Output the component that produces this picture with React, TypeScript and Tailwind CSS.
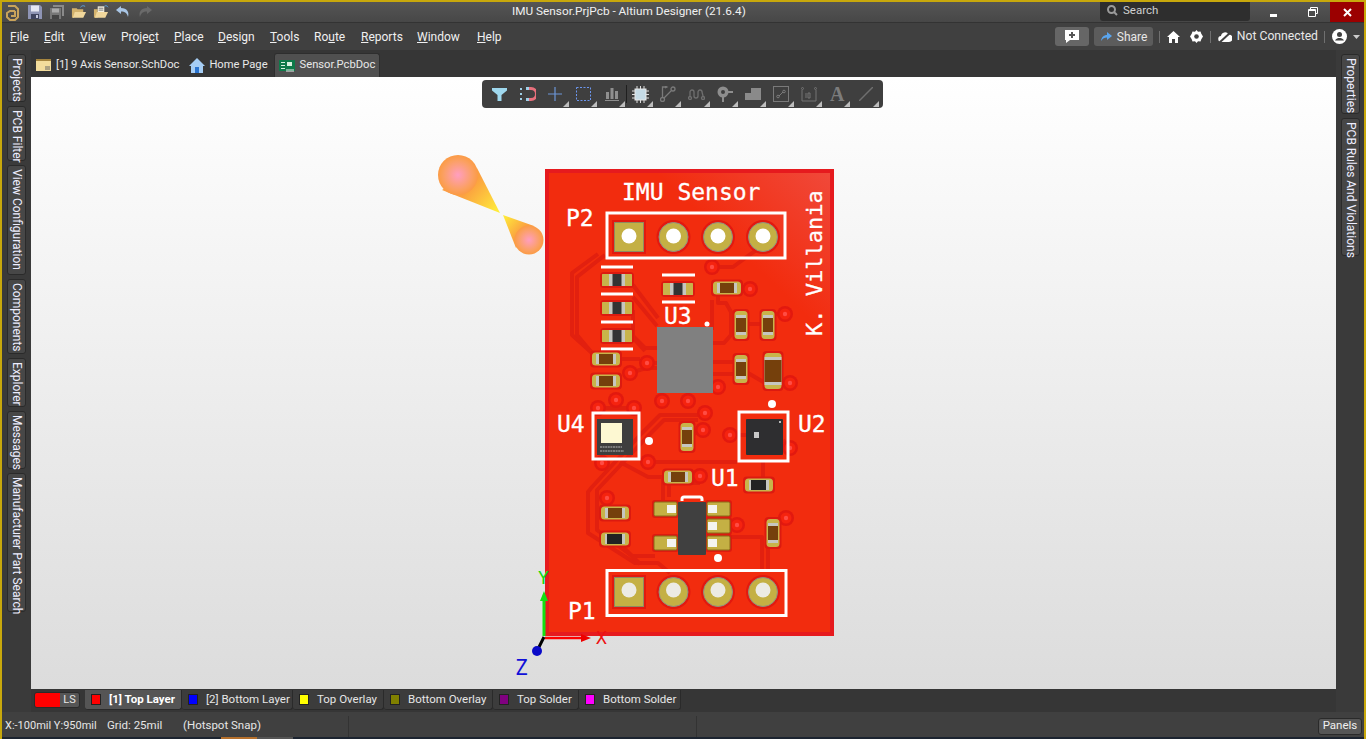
import React from "react"

const uiFont = "font-['Roboto',sans-serif]"

// Title bar quick access icons
function QuickIcons() {
  return (
    <div className="flex items-center gap-[6px] pl-[3px]">
      <svg width="15" height="17" viewBox="0 0 15 17" className="mr-[1px]" fill="none" stroke="#c9a35b" strokeWidth="2">
        <path d="M3 2h7l3 3v8l-3 3H5l-3-3V9l3-2h5" />
        <path d="M10 7v5H6" />
      </svg>
      <svg width="16" height="16" viewBox="0 0 16 16">
        <path d="M1 1h12l2 2v12H1z" fill="#8e94b5" />
        <rect x="4" y="1.5" width="8" height="6" fill="#e4e6f2" />
        <rect x="4" y="10" width="8" height="5" fill="#3f4460" />
        <rect x="9" y="11" width="2" height="3" fill="#c5c8dc" />
      </svg>
      <svg width="16" height="16" viewBox="0 0 16 16">
        <path d="M4 1h11v11h-2V3H4z" fill="#8a8a8a" />
        <path d="M1 4h11v11H1z" fill="#777" />
        <rect x="3" y="4.5" width="7" height="4" fill="#aaa" />
        <rect x="3" y="11" width="7" height="4" fill="#444" />
      </svg>
      <svg width="16" height="16" viewBox="0 0 17 16">
        <path d="M1 4h5l1 1h6v3H5L3 14H1z" fill="#d3b26d" />
        <path d="M4 8h12l-3 6H2z" fill="#f0d79c" />
        <path d="M10 3c2-2 3-2 5-1" stroke="#5ea4e0" strokeWidth="1" fill="none" />
      </svg>
      <svg width="16" height="16" viewBox="0 0 17 16">
        <path d="M1 5h4v9H1z" fill="#d3b26d" />
        <path d="M5 2h7v7H5z" fill="#f4f0e0" />
        <path d="M6 4h5M6 6h5" stroke="#777" strokeWidth="1" />
        <path d="M4 8h12l-3 6H2z" fill="#f0d79c" />
        <path d="M12 2c1-1 3-1 4 1" stroke="#5ea4e0" strokeWidth="1" fill="none" />
      </svg>
      <svg width="16" height="14" viewBox="0 0 16 14">
        <path d="M6 1 1 5l5 4V6.500c4 0 6 1.500 7 5.500 1.500-5-1-9-7-9z" fill="#a9c6e6" />
      </svg>
      <svg width="16" height="14" viewBox="0 0 16 14">
        <path d="M10 1l5 4-5 4V6.500c-4 0-6 1.500-7 5.500-1.500-5 1-9 7-9z" fill="#6a6a6a" />
      </svg>
    </div>
  )
}

function TitleBar() {
  return (
    <div className="relative flex h-[20px] shrink-0 items-center bg-gradient-to-b from-[#555555] to-[#474747]">
      <QuickIcons />
      <div className="absolute left-[510px] top-0 text-[11.800px] leading-[18px] text-[#f0f0f0]">
        IMU Sensor.PrjPcb - Altium Designer (21.6.4)
      </div>
      <div className="ml-auto flex h-full items-start">
        <div className="flex h-[19px] w-[150px] items-center gap-[5px] rounded-b-[3px] bg-[#2e2e2e] pb-[2px] pl-[7px] text-[11.500px] text-[#d0d0d0]">
          <svg width="11" height="11" viewBox="0 0 11 11">
            <circle cx="4.500" cy="4.500" r="3.500" fill="none" stroke="#9a9a9a" strokeWidth="2" />
            <path d="M7 7l3 3" stroke="#9a9a9a" strokeWidth="2" />
          </svg>
          Search
        </div>
        <div className="flex h-[20px] w-[46px] items-center justify-center">
          <div className="mt-[6px] h-[3px] w-[7px] bg-white" />
        </div>
        <div className="flex h-[20px] w-[34px] items-center justify-center">
          <svg width="10" height="10" viewBox="0 0 10 10">
            <path d="M2.500 2.500V.5h7v6h-2M.5 2.500h7v7h-7zM.5 3.500h7" fill="none" stroke="#fff" />
          </svg>
        </div>
        <div className="flex h-[20px] w-[34px] items-center justify-center bg-[#9b0000]">
          <svg width="9" height="9" viewBox="0 0 9 9">
            <path d="M1 1l7 7M8 1 1 8" stroke="#fff" strokeWidth="2" />
          </svg>
        </div>
      </div>
    </div>
  )
}

const menus: [string, string, string, string][] = [
  ["", "F", "ile", "w-[34px]"],
  ["", "E", "dit", "w-[36px]"],
  ["", "V", "iew", "w-[41px]"],
  ["Proje", "c", "t", "w-[53px]"],
  ["", "P", "lace", "w-[44px]"],
  ["", "D", "esign", "w-[52px]"],
  ["", "T", "ools", "w-[44px]"],
  ["Ro", "u", "te", "w-[47px]"],
  ["", "R", "eports", "w-[56px]"],
  ["", "W", "indow", "w-[60px]"],
  ["", "H", "elp", "w-[40px]"],
]

function MenuBar() {
  return (
    <div className="flex h-[28px] shrink-0 items-center border-t border-[#333333] bg-[#404040] pl-[8px] text-[12px] text-[#f0f0f0]">
      <div className="flex">
        {menus.map(([a, b, c, w]) => (
          <span key={a + b + c} className={w}>
            {a}
            <u>{b}</u>
            {c}
          </span>
        ))}
      </div>
      <div className="ml-auto flex items-center pr-[4px] text-[#e8e8e8]">
        <div className="flex h-[19px] w-[34px] items-center justify-center rounded-[3px] bg-[#666666]">
          <svg width="16" height="15" viewBox="0 0 16 15">
            <path d="M1 1h14v10H6l-4 3v-3H1z" fill="#fff" />
            <path d="M8 3v6M5 6h6" stroke="#555" strokeWidth="2" />
          </svg>
        </div>
        <div className="ml-[5px] flex h-[19px] w-[59px] items-center gap-[5px] rounded-[3px] bg-[#5c5c5c] pl-[7px]">
          <svg width="11" height="9" viewBox="0 0 11 9">
            <path d="M6 0l5 4-5 4V5.500C3.500 5.500 1.500 6.500 0 9c.5-4 3-6 6-6z" fill="#5aa5ee" />
          </svg>
          <span>Share</span>
        </div>
        <div className="ml-[6px] h-[12px] w-px bg-[#707070]" />
        <svg width="13" height="12" viewBox="0 0 13 12" className="ml-[7px]">
          <path d="M6.500 0 13 6h-2v6H8V8H5v4H2V6H0z" fill="#fff" />
        </svg>
        <svg width="13" height="13" viewBox="0 0 13 13" className="ml-[10px]">
          <path d="M6.500 0l1.500 1.800 2.500-.3.800 2.300 1.700 2.700-1.700 2.700-.8 2.300-2.500-.3L6.500 13 5 11.200l-2.500.3-.8-2.300L0 6.500l1.700-2.700.8-2.300 2.500.3z" fill="#fff" />
          <circle cx="6.500" cy="6.500" r="2.300" fill="#404040" />
        </svg>
        <div className="ml-[7px] h-[12px] w-px bg-[#707070]" />
        <svg width="14" height="12" viewBox="0 0 14 12" className="ml-[7px]">
          <path d="M3.500 11a3 3 0 0 1-.5-6 4 4 0 0 1 7.500-1.500A3.700 3.700 0 0 1 11 11z" fill="#fff" />
          <path d="M1 12 13 1" stroke="#404040" strokeWidth="2" />
        </svg>
        <span className="ml-[5px] text-[12.200px]">Not Connected</span>
        <div className="ml-[6px] h-[12px] w-px bg-[#707070]" />
        <svg width="15" height="15" viewBox="0 0 15 15" className="ml-[7px]">
          <circle cx="7.500" cy="7.500" r="7.500" fill="#fff" />
          <circle cx="7.500" cy="5.500" r="2.500" fill="#404040" />
          <path d="M3 11.500c1-2 3-2.500 4.500-2.500s3.500.5 4.500 2.500z" fill="#404040" />
        </svg>
        <svg width="7" height="4" viewBox="0 0 7 4" className="ml-[6px]">
          <path d="M0 0h7L3.500 4z" fill="#ccc" />
        </svg>
      </div>
    </div>
  )
}

function RailButton({ label, h }: { label: string; h: number }) {
  return (
    <div
      className="flex w-[19px] items-center justify-start whitespace-nowrap rounded-[3px] border border-[#2a2a2a] bg-[#474747] pt-[3px] text-[12px] leading-[16px] text-[#eeeeff] [writing-mode:vertical-rl]"
      style={{ height: h }}
    >
      {label}
    </div>
  )
}

function DocTabs() {
  return (
    <div className="flex h-[27px] shrink-0 items-end bg-[#363636] pl-[5px] text-[11.200px] text-[#e8e8e8]">
      <div className="flex h-[24px] items-center gap-[5px] pr-[10px]">
        <svg width="15" height="12" viewBox="0 0 15 12">
          <rect width="15" height="12" fill="#f2dc9c" />
          <path d="M0 0h15v2H0z" fill="#a5853f" />
          <path d="M9 8h5M9 10h5" stroke="#666" />
        </svg>
        <span>[1] 9 Axis Sensor.SchDoc</span>
      </div>
      <div className="flex h-[24px] items-center gap-[4px] pr-[6px]">
        <svg width="16" height="15" viewBox="0 0 16 15">
          <path d="M8 0 0 8h2v7h12V8h2z" fill="#a5cdf5" />
          <path d="M6 9h4v6H6z" fill="#2a74d0" />
        </svg>
        <span>Home Page</span>
      </div>
      <div className="flex h-[24px] items-center gap-[5px] rounded-t-[3px] border border-b-0 border-[#2e2e2e] bg-[#505050] px-[4px]">
        <svg width="16" height="12" viewBox="0 0 16 12">
          <rect width="16" height="11" fill="#0e7a4a" />
          <path d="M2 2h4v1H2zM2 5h4v1H2zM2 8h4v1H2zM8 2h5v4H8z" fill="#d8f0e0" />
          <path d="M8 9v3M10 9v3M12 9v3M14 9v3" stroke="#eee" />
        </svg>
        <span>Sensor.PcbDoc</span>
      </div>
    </div>
  )
}

function ToolIcon({ children, corner = true }: { children: React.ReactNode; corner?: boolean }) {
  return (
    <div className="relative flex h-[28px] w-[28.200px] items-center justify-center">
      {children}
      {corner && (
        <svg width="6" height="6" viewBox="0 0 6 6" className="absolute bottom-[1px] right-[1px]">
          <path d="M6 0v6H0z" fill="#bdbdbd" />
        </svg>
      )}
    </div>
  )
}

function FloatingToolbar() {
  return (
    <div className="absolute left-[451px] top-[3px] flex h-[28px] w-[401px] items-center rounded-[4px] bg-[#3f3f3f] pl-[3px]">
      <ToolIcon corner={false}>
        <svg width="15" height="13" viewBox="0 0 15 13">
          <path d="M0 0h15v2.500L9.500 7v6h-4V7L0 2.500z" fill="#9fd8ee" />
        </svg>
      </ToolIcon>
      <ToolIcon corner={false}>
        <svg width="17" height="14" viewBox="0 0 17 14">
          <path d="M7 1.500h5a5.500 5.500 0 0 1 0 11H7" fill="none" stroke="#e8707c" strokeWidth="3" />
          <path d="M7 1.500h3M7 12.500h3" stroke="#9fd0e8" strokeWidth="3" />
          <path d="M1 2h2M1 7h2M1 12h2" stroke="#9fd0e8" strokeWidth="2" />
        </svg>
      </ToolIcon>
      <ToolIcon>
        <svg width="14" height="14" viewBox="0 0 14 14">
          <path d="M7 0v14M0 7h14" stroke="#6c96d8" strokeWidth="1.200" />
        </svg>
      </ToolIcon>
      <ToolIcon>
        <svg width="15" height="14" viewBox="0 0 15 14">
          <rect x=".5" y=".5" width="14" height="13" fill="none" stroke="#6c96ee" strokeDasharray="2 1.500" />
        </svg>
      </ToolIcon>
      <ToolIcon>
        <svg width="14" height="14" viewBox="0 0 14 14">
          <path d="M1 5h3v7H1zM5.500 1h3v11h-3zM10 4h3v8h-3zM0 13h14v1H0z" fill="#8f8f8f" />
        </svg>
      </ToolIcon>
      <div className="mr-[-1px] h-[18px] w-px bg-[#1f1f1f]" />
      <ToolIcon>
        <svg width="17" height="17" viewBox="0 0 17 17">
          <rect x="3" y="3" width="11" height="11" fill="#c5dbe6" stroke="#e8e8e8" />
          <path d="M5 0v3M8.500 0v3M12 0v3M5 14v3M8.500 14v3M12 14v3M0 5h3M0 8.500h3M0 12h3M14 5h3M14 8.500h3M14 12h3" stroke="#dddddd" />
        </svg>
      </ToolIcon>
      <ToolIcon>
        <svg width="16" height="16" viewBox="0 0 16 16" fill="none" stroke="#7a7a7a" strokeWidth="1.300">
          <circle cx="2.500" cy="13.500" r="2" />
          <circle cx="13" cy="3" r="2" />
          <path d="M4 12l7.500-7.500M2.500 11V1H7M5 0l2 1-2 1" />
        </svg>
      </ToolIcon>
      <ToolIcon>
        <svg width="17" height="12" viewBox="0 0 17 12" fill="none" stroke="#6f6f6f" strokeWidth="1.300">
          <circle cx="2" cy="10" r="1.500" />
          <circle cx="15" cy="10" r="1.500" />
          <path d="M2 8V4a2 2 0 0 1 4 0v4a2 2 0 0 0 4 0V4a2 2 0 0 1 4 0l1 4" />
        </svg>
      </ToolIcon>
      <ToolIcon>
        <svg width="16" height="16" viewBox="0 0 16 16">
          <circle cx="6" cy="6" r="5.500" fill="#8e8e8e" />
          <circle cx="6" cy="6" r="2" fill="#3f3f3f" />
          <path d="M11 5h5v2h-5zM5 11h2v5H5z" fill="#8e8e8e" />
        </svg>
      </ToolIcon>
      <ToolIcon>
        <svg width="16" height="12" viewBox="0 0 16 12">
          <path d="M0 5h6V0h10v12H0z" fill="#8a8a8a" />
        </svg>
      </ToolIcon>
      <ToolIcon>
        <svg width="16" height="16" viewBox="0 0 16 16" fill="none" stroke="#7a7a7a">
          <rect x=".5" y=".5" width="15" height="15" />
          <circle cx="5" cy="10.500" r="1.300" />
          <circle cx="11" cy="5.500" r="1.300" />
          <path d="M6 10l4-4" />
        </svg>
      </ToolIcon>
      <ToolIcon>
        <svg width="16" height="15" viewBox="0 0 16 15" fill="none" stroke="#757575">
          <path d="M1 3v11h14V3" />
          <circle cx="1.500" cy="1.500" r="1" />
          <circle cx="14.500" cy="1.500" r="1" />
          <path d="M5 6v5M7 6h2v5H7z" />
        </svg>
      </ToolIcon>
      <ToolIcon>
        <span className="font-['Liberation_Serif',serif] text-[20px] font-bold leading-none text-[#7c7c7c]">A</span>
      </ToolIcon>
      <ToolIcon>
        <svg width="14" height="14" viewBox="0 0 14 14">
          <path d="M0 14 14 0" stroke="#6f6f6f" strokeWidth="1.500" />
        </svg>
      </ToolIcon>
    </div>
  )
}

// Component helpers for the board drawing, all in page pixel coordinates
function Via({ x, y }: { x: number; y: number }) {
  return (
    <g>
      <circle cx={x} cy={y} r="8" fill="#e2190f" />
      <circle cx={x} cy={y} r="5.500" fill="#f5230f" />
      <circle cx={x} cy={y} r="2.200" fill="#ff4c44" />
    </g>
  )
}

function Chip({ x, y, vertical, dark, big }: { x: number; y: number; vertical?: boolean; dark?: boolean; big?: boolean }) {
  const len = big ? 36 : dark ? 30 : 28
  const thick = big ? 17 : dark ? 12 : 13
  const inner = big ? 17 : dark ? 12 : 10
  const body = dark ? "#333333" : "#75400c"
  return (
    <g transform={`translate(${x} ${y}) rotate(${vertical ? 90 : 0})`}>
      <rect x={-len / 2 - 2} y={-thick / 2 - 2} width={len + 4} height={thick + 4} rx="4" fill="#dc1a10" />
      <rect x={-len / 2} y={-thick / 2} width={len} height={thick} rx={dark ? 0.500 : 3.500} fill="#c8b44a" />
      <rect x={dark ? -8 : -len / 2 + 4} y={-inner / 2} width={dark ? 16 : len - 8} height={inner} fill="#c6c6c0" />
      <rect x={dark ? -4.500 : -len / 2 + 7} y={-inner / 2} width={dark ? 9 : len - 14} height={inner} fill={body} />
    </g>
  )
}

function Header({ y, dy, holes }: { y: number; dy: number; holes: string }) {
  return (
    <g>
      <rect x="612" y={y - 17} width="34" height="34" fill="#e2190f" />
      <rect x="614.500" y={y - 14.500} width="29" height="29" fill="#c4b044" stroke="#8f8a60" />
      <circle cx="629" cy={y + dy} r="7.500" fill={holes} />
      {[673.500, 718, 763].map((x) => (
        <g key={x}>
          <circle cx={x} cy={y} r="17" fill="#e2190f" />
          <circle cx={x} cy={y} r="14.500" fill="#c4b044" stroke="#8f8f80" />
          <circle cx={x} cy={y + dy} r="7.500" fill={holes} />
        </g>
      ))}
    </g>
  )
}

function Pad({ x, y, flip }: { x: number; y: number; flip?: boolean }) {
  return (
    <g>
      <rect x={x - 2} y={y - 2} width="27" height="18" rx="3" fill="#dc1a10" />
      <rect x={x} y={y} width="23" height="14" rx="1.500" fill="#c4b044" stroke="#8a6a18" />
      <rect x={flip ? x + 1 : x + 13} y={y + 3} width="9" height="8" fill="#f4f4f0" />
    </g>
  )
}

const traces = [
  "M598 254 L572 273 V335 L592 353 H600",
  "M605 255 L577 277 V335 L598 360",
  "M633 285 L658 318",
  "M633 297 L657 326",
  "M633 310 V336 L645 348 H657",
  "M633 338 L645 351",
  "M647 363 H657",
  "M630 373 L646 368 H657",
  "M606 359 H640",
  "M763 245 L733 267 H712",
  "M718 296 V303 H726 L731 312 V335 L724 343 H713",
  "M712 300 V330",
  "M727 288 H750",
  "M742 324 H768 M785 314 H768",
  "M713 362 H742",
  "M713 374 H735",
  "M748 373 L765 383 H790",
  "M718 387 V393",
  "M662 401 V393",
  "M688 401 V393",
  "M698 415 H660 L642 433 L592 487 L588 492 V533 L635 563 H658 L670 573",
  "M698 420 H664 L648 436 L597 490 V530 L632 556 H655",
  "M703 430 L687 437",
  "M598 408 H634",
  "M648 462 H737",
  "M730 435 H746",
  "M663 475 V503",
  "M669 483 V497",
  "M669 483 H700",
  "M763 461 V480",
  "M790 448 L783 440",
  "M678 477 H648 L620 462",
  "M730 537 H762 V570",
  "M768 547 V570",
  "M730 526 H737",
  "M773 521 H786",
  "M607 498 V512",
  "M615 539 L640 564",
]

const vias = [
  [750, 289], [712, 267], [785, 314], [790, 383], [647, 363], [630, 373], [718, 387],
  [662, 401], [688, 401], [616, 400], [598, 408], [634, 408], [705, 413], [703, 430],
  [730, 435], [790, 448], [648, 462], [602, 463], [700, 476], [607, 498], [737, 525], [786, 518],
]

function BoardDrawing() {
  const silk = "font-['DejaVu_Sans_Mono',monospace]"
  return (
    <svg viewBox="31 77 1305 612" className="h-full w-full">
      <defs>
        <radialGradient id="padA">
          <stop offset="0" stopColor="#ff9ec0" />
          <stop offset="0.75" stopColor="#fba060" />
          <stop offset="1" stopColor="#fb9b45" />
        </radialGradient>
        <linearGradient id="coneA" x1="458" y1="175" x2="500" y2="213" gradientUnits="userSpaceOnUse">
          <stop offset="0.3" stopColor="#fba040" />
          <stop offset="1" stopColor="#fff23a" />
        </linearGradient>
        <linearGradient id="coneB" x1="529" y1="240" x2="502" y2="215" gradientUnits="userSpaceOnUse">
          <stop offset="0.3" stopColor="#fba040" />
          <stop offset="1" stopColor="#fff23a" />
        </linearGradient>
        <linearGradient id="boardFill" x1="690" y1="320" x2="834" y2="169" gradientUnits="userSpaceOnUse">
          <stop offset="0.4" stopColor="#f22c0e" />
          <stop offset="1" stopColor="#f04a3c" />
        </linearGradient>
      </defs>

      {/* Origin marker */}
      <path d="M477 168 L500 213 L442 190 Z" fill="url(#coneA)" />
      <circle cx="458" cy="175" r="20" fill="url(#padA)" />
      <path d="M503 215 L534 226 L516 248 Z" fill="url(#coneB)" />
      <circle cx="529" cy="240" r="14.500" fill="url(#padA)" />

      {/* Board */}
      <rect x="547" y="171" width="285" height="463" fill="url(#boardFill)" stroke="#e61a1e" strokeWidth="4" />

      <g fill="none" stroke="#e2200f" strokeWidth="4" strokeLinejoin="round">
        {traces.map((d) => (
          <path key={d} d={d} />
        ))}
      </g>
      {vias.map(([x, y]) => (
        <Via key={`${x}-${y}`} x={x} y={y} />
      ))}

      <Header y={237} dy={-1} holes="#ffffff" />
      <Header y={592} dy={-2} holes="#ecebe4" />

      {/* Silkscreen */}
      <g fill="none" stroke="#ffffff" strokeWidth="3">
        <rect x="607" y="213" width="178" height="45" />
        <rect x="607" y="570.500" width="179" height="45" />
        <rect x="593" y="413" width="46" height="46" />
        <rect x="739" y="412" width="49" height="49" />
        <path d="M601 267h32M601 294h32M601 322h32M601 349h32M662 275h33M662 302h33" />
        <path d="M682 501v-2a2 2 0 0 1 2-2h16a2 2 0 0 1 2 2v2" />
      </g>
      <g fill="#ffffff" stroke="#ffffff" strokeWidth="0.300" className={silk} fontSize="23">
        <text x="622" y="200">IMU Sensor</text>
        <text x="566" y="226">P2</text>
        <text x="664" y="324">U3</text>
        <text x="557" y="432">U4</text>
        <text x="798" y="432">U2</text>
        <text x="711" y="486">U1</text>
        <text x="568" y="619">P1</text>
        <text transform="translate(822 336) rotate(-90)" fontSize="22">K. Villania</text>
      </g>
      <circle cx="707" cy="324" r="2.500" fill="#fff" />
      <circle cx="772" cy="404" r="4" fill="#fff" />
      <circle cx="649" cy="441" r="4" fill="#fff" />
      <circle cx="718" cy="558" r="4" fill="#fff" />

      {/* Parts */}
      <Chip x={617} y={280} dark />
      <Chip x={617} y={308} dark />
      <Chip x={617} y={336} dark />
      <Chip x={678} y={289} dark />
      <Chip x={727} y={288} />
      <Chip x={741} y={325} vertical />
      <Chip x={768} y={325} vertical />
      <Chip x={741} y={369} vertical />
      <Chip x={773} y={371} vertical big />
      <Chip x={606} y={359} />
      <Chip x={606} y={381} />
      <Chip x={687} y={437} vertical />
      <Chip x={678} y={477} />
      <Chip x={759} y={485} />
      <rect x="751" y="480" width="15" height="10" fill="#222222" />
      <Chip x={615} y={513} />
      <Chip x={615} y={539} />
      <rect x="607" y="534" width="15" height="10" fill="#222222" />
      <Chip x={773} y={533} vertical />

      <rect x="657" y="327" width="56" height="66" fill="#808080" />

      <rect x="597" y="419" width="36" height="36" fill="#3e3e3e" />
      <rect x="601" y="423" width="21" height="20" fill="#fdf8d2" />
      <path d="M600 447h22M600 451h24" stroke="#b8b8b8" strokeWidth="1" strokeDasharray="2 .6" />

      <rect x="746" y="419" width="37" height="36" rx="1" fill="#2e2e30" />
      <rect x="754" y="432" width="5" height="6" fill="#c8c8c8" />
      <rect x="779" y="421" width="2" height="2" fill="#bbbbbb" />

      <Pad x={654} y={502} />
      <Pad x={654} y={536} />
      <Pad x={707} y={502} flip />
      <Pad x={707} y={519} flip />
      <Pad x={707} y={536} flip />
      <rect x="678" y="502" width="28" height="53" rx="1" fill="#404040" />

      {/* Axes */}
      <path d="M544 636V600" stroke="#12e012" strokeWidth="3" />
      <path d="M544 591l4 10h-8z" fill="#12e012" />
      <path d="M545 638h38" stroke="#ff0000" strokeWidth="2.500" />
      <path d="M591 638l-10 4v-8z" fill="#ee0000" />
      <path d="M544 637l-7 14" stroke="#000" strokeWidth="3" />
      <circle cx="537" cy="651" r="5" fill="#0a0ac8" />
      <text x="538" y="584" fontSize="18" fill="#12d812" className={silk}>Y</text>
      <text x="596" y="644" fontSize="18" fill="#ee1010" className={silk}>X</text>
      <text x="515" y="675" fontSize="21" fill="#1010d8" className={silk}>Z</text>
    </svg>
  )
}

const layers = [
  { name: "[1] Top Layer", color: "bg-[#ff0000]", w: "w-[97px]", active: true },
  { name: "[2] Bottom Layer", color: "bg-[#0000ff]", w: "w-[111px]" },
  { name: "Top Overlay", color: "bg-[#ffff00]", w: "w-[91px]" },
  { name: "Bottom Overlay", color: "bg-[#808000]", w: "w-[109px]" },
  { name: "Top Solder", color: "bg-[#800080]", w: "w-[86px]" },
  { name: "Bottom Solder", color: "bg-[#ff00ff]", w: "w-[102px]" },
]

function LayerTabs() {
  return (
    <div className="flex h-[23px] shrink-0 items-start bg-[#363636] pl-[3px] pt-[1px] text-[11.500px] text-[#e6e6e6]">
      <div className="mr-[5px] mt-[2px] flex h-[16px] w-[46px] overflow-hidden rounded-[3px] border border-[#2a2a2a]">
        <div className="w-[25px] bg-[#ff0000]" />
        <div className="flex flex-1 items-center justify-center bg-[#555555] text-[11px]">LS</div>
      </div>
      {layers.map((l) => (
        <div
          key={l.name}
          className={`flex h-[20px] items-center gap-[8px] rounded-b-[3px] border-r border-b border-[#2a2a2a] pl-[6px] ${l.w} ${l.active ? "bg-[#555555] font-bold text-white" : "bg-[#3c3c3c]"}`}
        >
          <div className={`h-[11px] w-[10px] border border-[#222222] ${l.color}`} />
          <span className="whitespace-nowrap">{l.name}</span>
        </div>
      ))}
    </div>
  )
}

function StatusBar() {
  return (
    <div className="flex h-[25px] shrink-0 items-center bg-[#404040] pt-[3px] text-[11.500px] text-[#e6e6e6]">
      <span className="ml-[3px] w-[102px] text-[11px]">X:-100mil Y:950mil</span>
      <span className="w-[76px]">Grid: 25mil</span>
      <span className="w-[165px]">(Hotspot Snap)</span>
      <div className="h-[21px] w-px bg-[#333333]" />
      <div className="ml-[347px] h-[21px] w-px bg-[#333333]" />
      <div className="ml-auto mr-[2px] flex h-[17px] w-[44px] items-center justify-center rounded-[3px] border border-[#2a2a2a] bg-[#565656] text-[#f0f0f0]">
        Panels
      </div>
    </div>
  )
}

export default function App() {
  return (
    <div className={`flex h-[739px] w-[1366px] flex-col overflow-hidden border-x-2 border-t-2 border-[#c8a80c] bg-[#363636] ${uiFont}`}>
      <TitleBar />
      <MenuBar />
      <div className="flex min-h-0 flex-1">
        <div className="flex w-[29px] shrink-0 flex-col gap-[4px] bg-[#3a3a3a] pl-[5px] pt-[4px]">
          <RailButton label="Projects" h={48} />
          <RailButton label="PCB Filter" h={55} />
          <RailButton label="View Configuration" h={110} />
          <RailButton label="Components" h={75} />
          <RailButton label="Explorer" h={49} />
          <RailButton label="Messages" h={58} />
          <RailButton label="Manufacturer Part Search" h={139} />
        </div>
        <div className="flex min-w-0 flex-1 flex-col">
          <DocTabs />
          <div className="relative min-h-0 flex-1 bg-gradient-to-b from-white to-[#dcdcdc]">
            <BoardDrawing />
            <FloatingToolbar />
          </div>
          <LayerTabs />
        </div>
        <div className="flex w-[28px] shrink-0 flex-col gap-[4px] bg-[#3a3a3a] pl-[5px] pt-[4px]">
          <RailButton label="Properties" h={60} />
          <RailButton label="PCB Rules And Violations" h={138} />
        </div>
      </div>
      <StatusBar />
      <div className="flex h-[2px] shrink-0 bg-[#1c2430] pl-[219px]">
        <div className="h-full w-[36px] bg-[#b5702c]" />
        <div className="h-full w-[36px] bg-[#555555]" />
      </div>
    </div>
  )
}
